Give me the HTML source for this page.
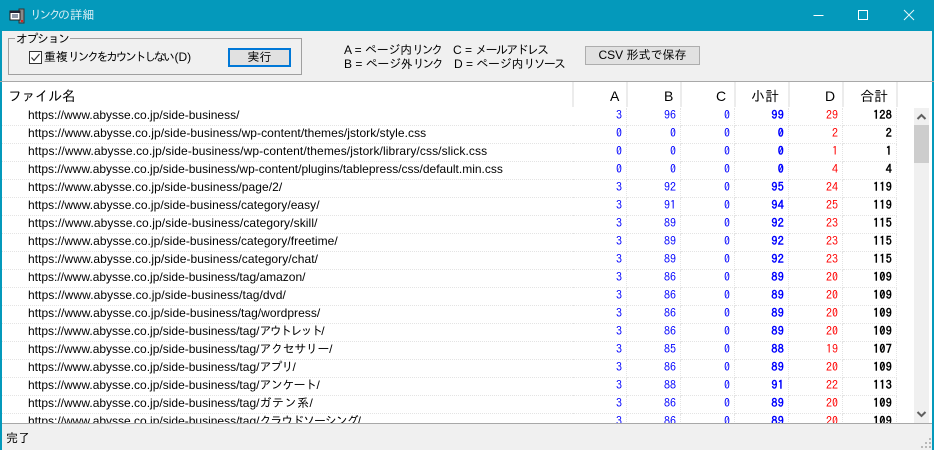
<!DOCTYPE html>
<html lang="ja">
<head>
<meta charset="utf-8">
<title>リンクの詳細</title>
<style>
html,body{margin:0;padding:0}
body{width:934px;height:450px;overflow:hidden;position:relative;background:#f0f0f0;font:12px/14px "Liberation Sans","IPAGothic",sans-serif;color:#000}
.a{position:absolute;white-space:nowrap}
#title{left:0;top:0;width:934px;height:31px;background:#0499bb}
#list{left:2px;top:82px;width:930px;height:341px;background:#fff;overflow:hidden}
table{position:absolute;left:0;top:26px;border-collapse:separate;border-spacing:0;table-layout:fixed;width:895px}
td{height:18px;box-sizing:border-box;padding:0 4px 0 0;vertical-align:top;border-bottom:1px dotted #e4e4e4;border-right:1px dotted #e4e4e4;text-align:right;font:12px/15px "IPAGothic","Liberation Mono",monospace;overflow:hidden;white-space:nowrap}
td.u{text-align:left;padding:0 0 0 26px;font:12px/15px "Liberation Sans","IPAGothic",sans-serif;color:#000;border-right:0}
td.b{color:#00f}
td.s{color:#00f;font-weight:bold;letter-spacing:.3px}
td.r{color:#f00}
td.t{color:#000;font-weight:bold;letter-spacing:.3px}
.h{position:absolute;top:82px;height:25px;width:2px;background:#ececec}
.hd{position:absolute;top:88px;font:14px/16px "Liberation Sans","IPAGothic",sans-serif;color:#000}
</style>
</head>
<body>
<div id="title" class="a"></div>
<svg class="a" style="left:9px;top:8px" width="16" height="16" viewBox="0 0 16 16"><rect x="10" y="1" width="5" height="14" fill="#8a8a8a" stroke="#333"/><rect x="1" y="3" width="10" height="9" fill="#fff" stroke="#222"/><rect x="1" y="3" width="10" height="2" fill="#223"/><path d="M3 7h6M3 9h6" stroke="#235" /><rect x="12" y="12" width="2" height="2" fill="#d22"/></svg>
<div class="a" style="left:30px;top:8px;color:#d8eef4;font:12px/15px 'Liberation Sans','IPAGothic',sans-serif"><span style="letter-spacing:-2.700px">リンクの</span><span style="margin-left:3px">詳細</span></div>
<svg class="a" style="left:800px;top:0" width="134" height="31" viewBox="0 0 134 31"><path d="M13.500 15.500H23.500" stroke="#fff" fill="none"/><rect x="58.500" y="10.500" width="9" height="9" stroke="#fff" fill="none"/><path d="M104 10L114 20M114 10L104 20" stroke="#e8f6f9" fill="none"/></svg>
<div class="a" style="left:0;top:31px;width:2px;height:419px;background:#0499bb"></div>
<div class="a" style="left:932px;top:31px;width:2px;height:419px;background:#0499bb"></div>

<div class="a" style="left:8px;top:38px;width:292px;height:35px;border:1px solid #a0a0a0"></div>
<div class="a" style="left:15px;top:32px;background:#f0f0f0;padding:0 1px;font:12px/14px 'Liberation Sans','IPAGothic',sans-serif;letter-spacing:-1.500px">オプション</div>
<svg class="a" style="left:29px;top:51px" width="13" height="13" viewBox="0 0 13 13"><rect x=".5" y=".5" width="12" height="12" fill="#fff" stroke="#333"/><path d="M2.500 6.500L5 9.500L10.500 3" stroke="#333" stroke-width="1.200" fill="none"/></svg>
<div class="a" style="left:44px;top:50px">重複<span style="letter-spacing:-2.500px">リンクをカウントしない</span><span style="margin-left:2px">(D)</span></div>
<div class="a" style="left:228px;top:48px;width:63px;height:19px;box-sizing:border-box;border:2px solid #0078d7;background:#e1e1e1;text-align:center;line-height:15px">実行</div>

<div class="a" style="left:344px;top:43px">A = <span style="letter-spacing:-.3px">ページ</span>内<span style="letter-spacing:-2.500px">リンク</span></div>
<div class="a" style="left:453px;top:43px">C = <span style="letter-spacing:-1.700px">メールアドレス</span></div>
<div class="a" style="left:344px;top:57px">B = <span style="letter-spacing:-.3px">ページ</span>外<span style="letter-spacing:-2.500px">リンク</span></div>
<div class="a" style="left:454px;top:57px">D = <span style="letter-spacing:-.3px">ページ</span>内<span style="letter-spacing:-1.800px">リソース</span></div>
<div class="a" style="left:585px;top:46px;width:115px;height:19px;box-sizing:border-box;border:1px solid #adadad;background:#e1e1e1;text-align:center;line-height:17px">CSV 形式で保存</div>

<div class="a" style="left:0;top:81px;width:934px;height:1px;background:#a8a8a8"></div>
<div id="list" class="a">
<table>
<colgroup><col style="width:571px"><col style="width:54px"><col style="width:54px"><col style="width:54px"><col style="width:54px"><col style="width:54px"><col style="width:54px"></colgroup>
<tr><td class="u">https://www.abysse.co.jp/side-business/</td><td class="b">3</td><td class="b">96</td><td class="b">0</td><td class="s">99</td><td class="r">29</td><td class="t">128</td></tr>
<tr><td class="u" style="letter-spacing:.055px">https://www.abysse.co.jp/side-business/wp-content/themes/jstork/style.css</td><td class="b">0</td><td class="b">0</td><td class="b">0</td><td class="s">0</td><td class="r">2</td><td class="t">2</td></tr>
<tr><td class="u" style="letter-spacing:.107px">https://www.abysse.co.jp/side-business/wp-content/themes/jstork/library/css/slick.css</td><td class="b">0</td><td class="b">0</td><td class="b">0</td><td class="s">0</td><td class="r">1</td><td class="t">1</td></tr>
<tr><td class="u">https://www.abysse.co.jp/side-business/wp-content/plugins/tablepress/css/default.min.css</td><td class="b">0</td><td class="b">0</td><td class="b">0</td><td class="s">0</td><td class="r">4</td><td class="t">4</td></tr>
<tr><td class="u" style="letter-spacing:.06px">https://www.abysse.co.jp/side-business/page/2/</td><td class="b">3</td><td class="b">92</td><td class="b">0</td><td class="s">95</td><td class="r">24</td><td class="t">119</td></tr>
<tr><td class="u" style="letter-spacing:.04px">https://www.abysse.co.jp/side-business/category/easy/</td><td class="b">3</td><td class="b">91</td><td class="b">0</td><td class="s">94</td><td class="r">25</td><td class="t">119</td></tr>
<tr><td class="u" style="letter-spacing:.1px">https://www.abysse.co.jp/side-business/category/skill/</td><td class="b">3</td><td class="b">89</td><td class="b">0</td><td class="s">92</td><td class="r">23</td><td class="t">115</td></tr>
<tr><td class="u" style="letter-spacing:.04px">https://www.abysse.co.jp/side-business/category/freetime/</td><td class="b">3</td><td class="b">89</td><td class="b">0</td><td class="s">92</td><td class="r">23</td><td class="t">115</td></tr>
<tr><td class="u" style="letter-spacing:.06px">https://www.abysse.co.jp/side-business/category/chat/</td><td class="b">3</td><td class="b">89</td><td class="b">0</td><td class="s">92</td><td class="r">23</td><td class="t">115</td></tr>
<tr><td class="u">https://www.abysse.co.jp/side-business/tag/amazon/</td><td class="b">3</td><td class="b">86</td><td class="b">0</td><td class="s">89</td><td class="r">20</td><td class="t">109</td></tr>
<tr><td class="u" style="letter-spacing:.08px">https://www.abysse.co.jp/side-business/tag/dvd/</td><td class="b">3</td><td class="b">86</td><td class="b">0</td><td class="s">89</td><td class="r">20</td><td class="t">109</td></tr>
<tr><td class="u" style="letter-spacing:.04px">https://www.abysse.co.jp/side-business/tag/wordpress/</td><td class="b">3</td><td class="b">86</td><td class="b">0</td><td class="s">89</td><td class="r">20</td><td class="t">109</td></tr>
<tr><td class="u">https://www.abysse.co.jp/side-business/tag/<span style="letter-spacing:-1.700px">アウトレット</span>/</td><td class="b">3</td><td class="b">86</td><td class="b">0</td><td class="s">89</td><td class="r">20</td><td class="t">109</td></tr>
<tr><td class="u">https://www.abysse.co.jp/side-business/tag/<span style="letter-spacing:-.4px">アクセサリー</span>/</td><td class="b">3</td><td class="b">85</td><td class="b">0</td><td class="s">88</td><td class="r">19</td><td class="t">107</td></tr>
<tr><td class="u">https://www.abysse.co.jp/side-business/tag/<span style="letter-spacing:-1px">アプリ</span>/</td><td class="b">3</td><td class="b">86</td><td class="b">0</td><td class="s">89</td><td class="r">20</td><td class="t">109</td></tr>
<tr><td class="u">https://www.abysse.co.jp/side-business/tag/<span style="letter-spacing:-.6px">アンケート</span>/</td><td class="b">3</td><td class="b">88</td><td class="b">0</td><td class="s">91</td><td class="r">22</td><td class="t">113</td></tr>
<tr><td class="u">https://www.abysse.co.jp/side-business/tag/<span style="letter-spacing:.5px">ガテン系</span>/</td><td class="b">3</td><td class="b">86</td><td class="b">0</td><td class="s">89</td><td class="r">20</td><td class="t">109</td></tr>
<tr><td class="u">https://www.abysse.co.jp/side-business/tag/<span style="letter-spacing:-1.100px">クラウドソーシング</span>/</td><td class="b">3</td><td class="b">86</td><td class="b">0</td><td class="s">89</td><td class="r">20</td><td class="t">109</td></tr>
</table>
</div>

<div class="h" style="left:572px"></div><div class="h" style="left:626px"></div><div class="h" style="left:680px"></div><div class="h" style="left:734px"></div><div class="h" style="left:788px"></div><div class="h" style="left:842px"></div><div class="h" style="left:896px"></div>
<div class="hd" style="left:8px;letter-spacing:-.6px">ファイル名</div>
<div class="hd" style="left:610px">A</div>
<div class="hd" style="left:664px">B</div>
<div class="hd" style="left:716px">C</div>
<div class="hd" style="left:751px">小計</div>
<div class="hd" style="left:825px">D</div>
<div class="hd" style="left:860px">合計</div>

<div class="a" style="left:914px;top:108px;width:15px;height:315px;background:#f0f0f0"></div>
<div class="a" style="left:914px;top:125px;width:15px;height:38px;background:#cdcdcd"></div>
<svg class="a" style="left:914px;top:108px" width="15" height="17" viewBox="0 0 15 17"><path d="M3.500 11L7.500 7L11.500 11" stroke="#606060" stroke-width="2" fill="none"/></svg>
<svg class="a" style="left:914px;top:406px" width="15" height="17" viewBox="0 0 15 17"><path d="M3.500 6L7.500 10L11.500 6" stroke="#606060" stroke-width="2" fill="none"/></svg>

<div class="a" style="left:2px;top:423px;width:930px;height:1px;background:#a8a8a8"></div>
<div class="a" style="left:6px;top:431px">完了</div>
<svg class="a" style="left:921px;top:438px" width="11" height="11" viewBox="0 0 11 11" fill="#b8b8b8"><rect x="8" y="0" width="2" height="2"/><rect x="4" y="4" width="2" height="2"/><rect x="8" y="4" width="2" height="2"/><rect x="0" y="8" width="2" height="2"/><rect x="4" y="8" width="2" height="2"/><rect x="8" y="8" width="2" height="2"/></svg>
</body>
</html>
